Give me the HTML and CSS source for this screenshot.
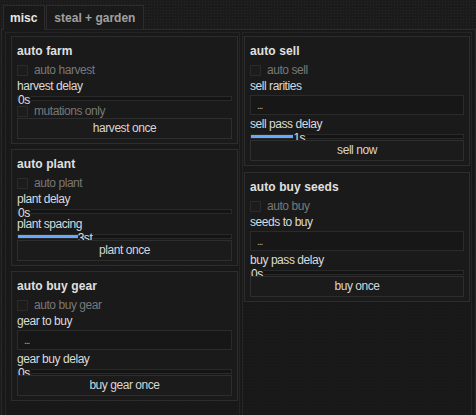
FILE: index.html
```html
<!DOCTYPE html>
<html lang="en">
<head>
<meta charset="utf-8">
<title>misc</title>
<link rel="stylesheet" href="styles.css">
</head>
<body>
<div class="tabs">
  <div class="tab tab-active">misc</div>
  <div class="tab">steal + garden</div>
</div>
<div class="panel">
  <div class="col col-left">
    <section class="box">
      <h3 class="box-title">auto farm</h3>
      <div class="check"><span class="cb"></span><span>auto harvest</span></div>
      <div class="field-label">harvest delay</div>
      <div class="slider"><div class="fill" style="width:0%"></div><span class="val">0s</span></div>
      <div class="check"><span class="cb"></span><span>mutations only</span></div>
      <button class="btn">harvest once</button>
    </section>
    <section class="box">
      <h3 class="box-title">auto plant</h3>
      <div class="check"><span class="cb"></span><span>auto plant</span></div>
      <div class="field-label">plant delay</div>
      <div class="slider"><div class="fill" style="width:0%"></div><span class="val">0s</span></div>
      <div class="field-label">plant spacing</div>
      <div class="slider"><div class="fill" style="width:28%"></div><span class="val">3st</span></div>
      <button class="btn">plant once</button>
    </section>
    <section class="box">
      <h3 class="box-title">auto buy gear</h3>
      <div class="check"><span class="cb"></span><span>auto buy gear</span></div>
      <div class="field-label">gear to buy</div>
      <div class="select"><span class="dots">...</span></div>
      <div class="field-label">gear buy delay</div>
      <div class="slider"><div class="fill" style="width:0%"></div><span class="val">0s</span></div>
      <button class="btn">buy gear once</button>
    </section>
  </div>
  <div class="col col-right">
    <section class="box">
      <h3 class="box-title">auto sell</h3>
      <div class="check"><span class="cb"></span><span>auto sell</span></div>
      <div class="field-label">sell rarities</div>
      <div class="select"><span class="dots">...</span></div>
      <div class="field-label">sell pass delay</div>
      <div class="slider"><div class="fill" style="width:20%"></div><span class="val">1s</span></div>
      <button class="btn">sell now</button>
    </section>
    <section class="box">
      <h3 class="box-title">auto buy seeds</h3>
      <div class="check"><span class="cb"></span><span>auto buy</span></div>
      <div class="field-label">seeds to buy</div>
      <div class="select"><span class="dots">...</span></div>
      <div class="field-label">buy pass delay</div>
      <div class="slider"><div class="fill" style="width:0%"></div><span class="val">0s</span></div>
      <button class="btn">buy once</button>
    </section>
  </div>
</div>
</body>
</html>
```

FILE: styles.css
```css
html, body {
  margin: 0;
  padding: 0;
  overflow: hidden;
}
body {
  width: 476px;
  height: 415px;
  background-color: #1b1b1b;
  font-family: "Liberation Sans", Arial, sans-serif;
  font-size: 12px;
  letter-spacing: -0.45px;
  color: #d8d8d8;
}
.tabs {
  height: 29px;
  box-sizing: border-box;
  padding: 5px 0 0 3px;
  display: flex;
  align-items: flex-start;
  gap: 1px;
  background-color: #1b1b1b;
  background-image: radial-gradient(circle, #262626 0.7px, transparent 0.9px);
  background-size: 3px 3px;
}
.tab {
  position: relative;
  z-index: 1;
  height: 24px;
  box-sizing: border-box;
  padding: 5px 8px 0 7px;
  border: 1px solid #2c2c2c;
  border-bottom: none;
  background: #1a1a1a;
  font-weight: bold;
  font-size: 12px;
  letter-spacing: 0;
  line-height: 14px;
  color: #a0a0a0;
}
.tab-active {
  height: 25px;
  padding: 5px 7px 0 6px;
  color: #e6e6e6;
  background: #191919;
}
.panel {
  margin-left: 1px;
  width: 475px;
  height: 386px;
  box-sizing: border-box;
  border: 1px solid #2a2a2a;
  border-bottom: none;
  padding: 2px 3px 0 3px;
  background-color: #181818;
  background-image: radial-gradient(circle, #1c1c1c 0.7px, transparent 0.9px);
  background-size: 3px 3px;
  display: grid;
  grid-template-columns: 235px 230px;
  column-gap: 2px;
}
.col {
  box-sizing: border-box;
  border: 1px solid #252525;
  border-bottom: none;
  display: flex;
  flex-direction: column;
  gap: 5px;
}
.col-left {
  padding: 3px 1px 0 5px;
}
.col-right {
  padding: 3px 1px 0 1px;
  gap: 6px;
}
.box {
  border: 1px solid #2d2d2d;
  background: #1a1a1a;
  padding: 6px 5px 4px 5px;
  display: flex;
  flex-direction: column;
}
.box-title {
  margin: 0;
  font-size: 12px;
  font-weight: bold;
  letter-spacing: 0.1px;
  line-height: 16px;
  color: #e0e0e0;
}
.check {
  margin-top: 4px;
  height: 14px;
  display: flex;
  align-items: center;
  gap: 6px;
  color: #787878;
  line-height: 14px;
}
.slider + .check {
  margin-top: 2px;
}
.cb {
  width: 11px;
  height: 11px;
  box-sizing: border-box;
  border: 1px solid #2a2a2a;
  background: #1c1c1c;
}
.field-label {
  margin-top: 3px;
  line-height: 13px;
  height: 13px;
  color: #dadada;
}
.slider {
  margin-top: 3px;
  margin-bottom: 1px;
  height: 5px;
  box-sizing: border-box;
  border: 1px solid #292929;
  background: #141414;
  display: flex;
  align-items: flex-start;
}
.fill {
  height: 3px;
  background: #66aaff;
  flex: none;
}
.val {
  margin-top: -2px;
  height: 9px;
  line-height: 10px;
  overflow: visible;
  padding-right: 1px;
  background: #1a1a1a;
  color: #e0e0e0;
  flex: none;
}
.select {
  margin-top: 2px;
  height: 20px;
  box-sizing: border-box;
  border: 1px solid #2b2b2b;
  background: #171717;
  padding-left: 6px;
  line-height: 18px;
}
.dots {
  color: #b0b0b0;
  letter-spacing: -1px;
  font-size: 10px;
}
.btn {
  position: relative;
  margin: 0;
  height: 21px;
  box-sizing: border-box;
  border: 1px solid #2e2e2e;
  background: #1b1b1b;
  color: #d6d6d6;
  font-family: "Liberation Sans", Arial, sans-serif;
  font-size: 12px;
  letter-spacing: -0.45px;
  line-height: 19px;
  padding: 0;
  text-align: center;
}
```
